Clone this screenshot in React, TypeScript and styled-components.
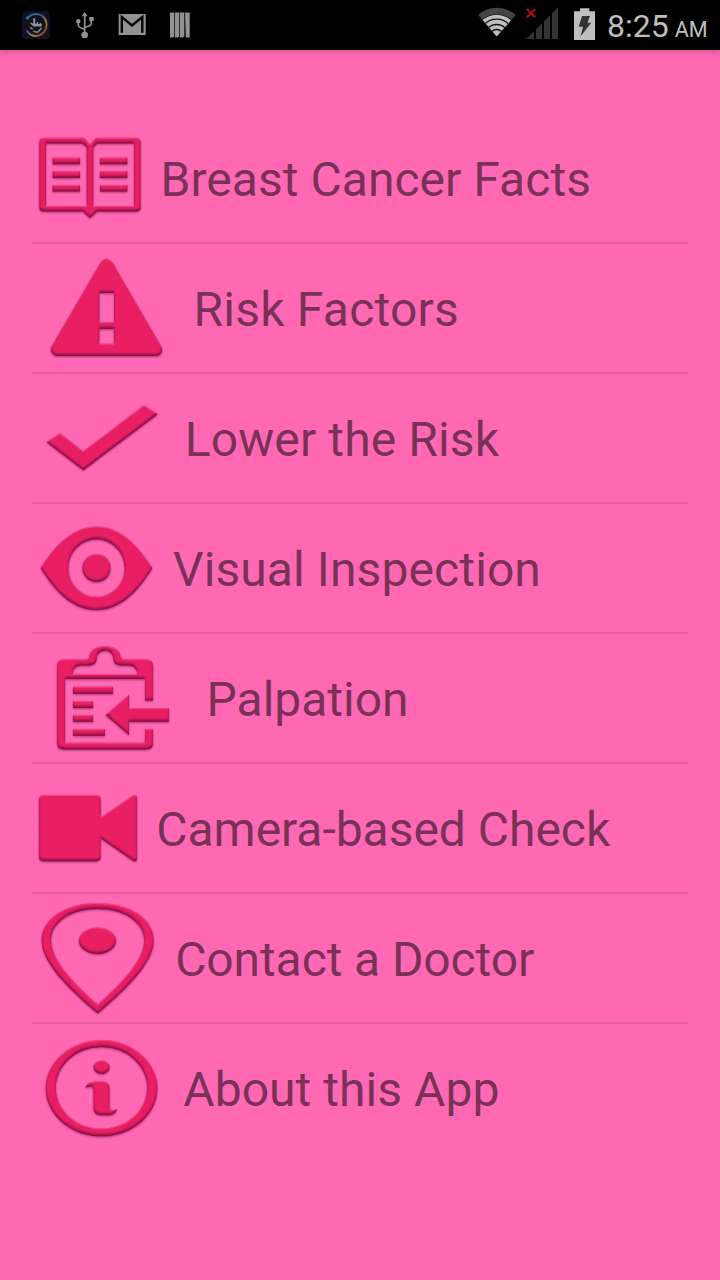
import React from "react";
import styled, { createGlobalStyle } from "styled-components";

const GlobalStyle = createGlobalStyle`
  body {
    margin: 0;
    background: #ff69b4;
    font-family: Roboto, "Noto Sans", sans-serif;
  }
`;

const Screen = styled.div`
  display: flex;
  flex-direction: column;
  width: 720px;
  height: 1280px;
  overflow: hidden;
  background: #ff69b4;
`;

const StatusBar = styled.header`
  display: flex;
  justify-content: space-between;
  flex: none;
  height: 50px;
  background: #000;
  box-shadow: 0 1px 6px rgba(60, 0, 40, 0.3);
`;

const StatusGroup = styled.div`
  display: flex;
`;

const Clock = styled.time`
  width: 113px;
  height: 50px;
  line-height: 53px;
  font-size: 32px;
  color: #bebebe;
  white-space: nowrap;
`;

const Meridiem = styled.span`
  margin-left: 6px;
  font-size: 21.6px;
`;

const Menu = styled.ul`
  list-style: none;
  margin: 64px 32px 0;
  padding: 0;
`;

const MenuItem = styled.li`
  display: flex;
  height: 128px;
  border-bottom: 2px solid #e65fa3;

  &:last-child {
    border-bottom-color: transparent;
  }
`;

const MenuIcon = styled.svg<{ $width: number }>`
  flex: none;
  width: ${(p) => p.$width}px;
  height: 128px;
  overflow: visible;
  fill: #e91e63;
  fill-rule: evenodd;
`;

const Label = styled.span<{ $spacing: number }>`
  font-size: 48px;
  line-height: 132px;
  letter-spacing: ${(p) => p.$spacing}px;
  color: #7a3158;
  white-space: nowrap;
`;

interface Entry {
  label: string;
  iconWidth: number;
  spacing: number;
  icon: React.ReactNode;
}

const entries: Entry[] = [
  {
    label: "Breast Cancer Facts",
    iconWidth: 128.5,
    spacing: 0.04,
    icon: (
      <>
        <path d="M12 23.7H52L58 30.5L64 23.7H104Q108.7 23.7 108.7 28.5V93Q108.7 97.5 104 97.5H65L58 104.2L51 97.5H12Q7.3 97.5 7.3 93V28.5Q7.3 23.7 12 23.7ZM14 29.5V92H54.7V33.5L50.7 29.5ZM61.3 33.5V92H102V29.5H65.3Z" />
        <path d="M20.7 43.7H48V50.3H20.7ZM20.7 57.3H48V64H20.7ZM20.7 71H48V77.6H20.7ZM68 43.7H95.3V50.3H68ZM68 57.3H95.3V64H68ZM68 71H95.3V77.6H68Z" />
      </>
    ),
  },
  {
    label: "Risk Factors",
    iconWidth: 161.5,
    spacing: 0.22,
    icon: (
      <path d="M68.8 18Q74.5 11 80.2 18L129 102Q132.5 108.5 125.5 112H24Q16.5 108.5 19.8 102ZM67.3 49V78H82V49ZM67.3 85V99.7H82V85Z" />
    ),
  },
  {
    label: "Lower the Risk",
    iconWidth: 152.7,
    spacing: 0.12,
    icon: <path d="M14.7 68.2L28 59.3L51.3 77.2L112 31.3L125.7 40.3L51.3 96.3Z" />,
  },
  {
    label: "Visual Inspection",
    iconWidth: 141,
    spacing: 0.1,
    icon: (
      <>
        <path d="M8.7 64C25 38 43 22.5 64.5 22.5S104 38 120.3 64C104 91 86 106 64.5 106S25 91 8.7 64ZM36.3 64a28.2 28.8 0 1 0 56.4 0a28.2 28.8 0 1 0-56.4 0Z" />
        <circle cx="64.5" cy="64" r="14" />
      </>
    ),
  },
  {
    label: "Palpation",
    iconWidth: 174.5,
    spacing: 0,
    icon: (
      <>
        <path d="M32 25.3H53Q57.3 25.3 57.7 21C59 15.5 65 12 73 12S87 15.5 88.3 21Q88.7 25.3 93 25.3H114Q121 25.3 121 32V66.5H113V45H33V108.7H113V95.3H121V109Q121 115.5 114 115.5H32Q25 115.5 25 109V32Q25 25.3 32 25.3ZM40.7 40H105.3C105.3 34 101 31.5 96 31.5H89C84 31.5 81.3 28.5 81.3 24.5C81 14 65 14 64.7 24.5C64.7 28.5 62 31.5 57 31.5H50C45 31.5 40.7 34 40.7 40Z" />
        <path d="M41 52.7H81V59.7H41ZM41 67.3H61V74H41ZM41 81H61V87.7H41ZM41 95.3H73V101.7H41Z" />
        <path d="M73.7 81L97 60.7V74H137V87.7H97V101Z" />
      </>
    ),
  },
  {
    label: "Camera-based Check",
    iconWidth: 124.3,
    spacing: -0.03,
    icon: (
      <path d="M12 31H64Q68.7 31 68.7 35.7V53.5L101 31.6Q105 30.3 105 34V94.7Q105 98.3 101 96.7L68.7 74.3V92.5Q68.7 97.3 64 97.3H12Q7 97.3 7 92.5V35.7Q7 31 12 31Z" />
    ),
  },
  {
    label: "Contact a Doctor",
    iconWidth: 143.2,
    spacing: -0.1,
    icon: (
      <>
        <path d="M65.7 119.5C44 101 9.7 71 9.7 46.5C9.7 24 34 9 65.7 9S121.7 24 121.7 46.5C121.7 71 87.4 101 65.7 119.5ZM65.7 110.5C84 94 112.3 68 112.3 46.5C112.3 28 92 15 65.7 15S19 28 19 46.5C19 68 47.4 94 65.7 110.5Z" />
        <ellipse cx="65.5" cy="46.7" rx="18.5" ry="13.3" />
      </>
    ),
  },
  {
    label: "About this App",
    iconWidth: 151.3,
    spacing: 0.05,
    icon: (
      <>
        <path d="M13.7 64.2a55.8 48.1 0 1 0 111.6 0a55.8 48.1 0 1 0-111.6 0ZM23.8 63.8a45.7 40.8 0 1 1 91.4 0a45.7 40.8 0 1 1-91.4 0Z" />
        <ellipse cx="69.6" cy="43.2" rx="8" ry="6.7" />
        <path d="M53.5 63.4C55 59 59 57.5 65 57.5H71Q77.5 57.5 77.5 64V82Q77.5 86.5 81.5 86.3L85 85.3C84 89.5 80 91.3 76 91.3H69Q61.5 91.3 61.5 84V66Q61.5 62.5 58 62.5Z" />
      </>
    ),
  },
];

/* Raised edge for the menu icons: dark lower rim, pale upper rim, faint halo. */
const BevelDefs = () => (
  <defs>
    <filter id="bevel" filterUnits="userSpaceOnUse" x="0" y="0" width="150" height="128" colorInterpolationFilters="sRGB">
      <feOffset in="SourceAlpha" dy="-1.6" result="up" />
      <feGaussianBlur in="up" stdDeviation="0.8" result="upSoft" />
      <feComposite in="SourceAlpha" in2="upSoft" operator="out" result="lowerRim" />
      <feFlood floodColor="#6a0a38" floodOpacity="0.8" />
      <feComposite in2="lowerRim" operator="in" result="lowerShade" />
      <feOffset in="SourceAlpha" dy="1" result="down" />
      <feGaussianBlur in="down" stdDeviation="0.7" result="downSoft" />
      <feComposite in="SourceAlpha" in2="downSoft" operator="out" result="upperRim" />
      <feFlood floodColor="#f56a9c" floodOpacity="0.5" />
      <feComposite in2="upperRim" operator="in" result="upperShade" />
      <feGaussianBlur in="SourceAlpha" stdDeviation="1.3" result="haloBase" />
      <feOffset in="haloBase" dy="0.6" result="haloShape" />
      <feFlood floodColor="#7a1450" floodOpacity="0.65" />
      <feComposite in2="haloShape" operator="in" result="halo" />
      <feMerge>
        <feMergeNode in="halo" />
        <feMergeNode in="SourceGraphic" />
        <feMergeNode in="upperShade" />
        <feMergeNode in="lowerShade" />
      </feMerge>
    </filter>
  </defs>
);

const NotificationIcons = () => (
  <svg width="220" height="50" viewBox="0 0 220 50" aria-hidden="true">
    <BevelDefs />
    <defs>
      <linearGradient id="dial" x1="0" y1="0" x2="1" y2="1">
        <stop offset="0.1" stopColor="#167f9b" />
        <stop offset="0.4" stopColor="#3f5aa0" />
        <stop offset="0.65" stopColor="#9c9320" />
        <stop offset="1" stopColor="#92152f" />
      </linearGradient>
    </defs>
    <rect x="22" y="11" width="28" height="28" rx="4" fill="#131020" />
    <path d="M28 17.5C33 12 42 13.5 45.3 19.5C49 27 44 36 35.5 36Q29.5 35.5 26.7 30.5" fill="none" stroke="url(#dial)" strokeWidth="1.8" />
    <circle cx="27.5" cy="18" r="1.7" fill="#15788a" />
    <path d="M33.2 18.3h2v5.2h1.6v-1.5h1.3v2h1.5v-1h1.2l1 1.5v2h-8.2l-3.3-3 1-1 1.9 1.2z" fill="#929099" />
    <path d="M30.2 27.5l2.6 1.6M33.5 30.6l1.7 1.4h3l3.3-4.3" fill="none" stroke="#85838d" strokeWidth="1.5" />
    <g fill="none" stroke="#929292" strokeWidth="1.7">
      <path d="M84.7 15V34M78.3 22V25Q78.3 27 80.5 27.7L84.7 29.5M91.3 20V23.5Q91.3 25.3 89 26L84.7 27.5" />
    </g>
    <g fill="#929292">
      <path d="M84.7 12L87.7 16.3H81.7ZM89.3 17h4.4v4h-4.4Z" />
      <circle cx="78.3" cy="21.3" r="2.2" />
      <circle cx="84.7" cy="35" r="3.3" />
      <rect x="118.7" y="14" width="27" height="21" />
      <path d="M170 12.5h4.3V37h-1.2l-.8 1-.8-1-.8 1-.7-1ZM175 12.5h4.3V37h-1.2l-.8 1-.8-1-.8 1-.7-1ZM180 12.5h4.3V37h-1.2l-.8 1-.8-1-.8 1-.7-1ZM185 12.5h4.7V38l-.8-1-.8 1-.8-1-.8 1-.7-1Z" />
    </g>
    <path d="M121.8 32.8V17L132 25.5L142.3 17V32.8" fill="none" stroke="#050505" strokeWidth="2.4" />
  </svg>
);

const SystemIcons = () => (
  <svg width="132" height="50" viewBox="475 0 132 50" aria-hidden="true">
    <defs>
      <clipPath id="wifi-fan">
        <path d="M496.7 36.5L477.5 14Q497 0 516.5 14Z" />
      </clipPath>
    </defs>
    <g clipPath="url(#wifi-fan)">
      <circle cx="496.7" cy="36.5" r="28.7" fill="#444" />
      <circle cx="496.7" cy="36.5" r="22.3" fill="#000" />
      <circle cx="496.7" cy="36.5" r="21.7" fill="#bebebe" />
      <g fill="none" stroke="#111" strokeWidth="1.3">
        <circle cx="496.7" cy="36.5" r="17.3" />
        <circle cx="496.7" cy="36.5" r="12" />
        <circle cx="496.7" cy="36.5" r="7" />
      </g>
    </g>
    <path d="M526 39L534 31.3V39ZM536 29.3L542 23.3V39H536ZM544 21.3L550 15.2V39H544ZM552 13.2L558 7.5V39H552Z" fill="#333" />
    <path d="M526.8 9L535.3 17.3M535.3 9L526.8 17.3" stroke="#a90c0c" strokeWidth="2" />
    <path d="M580 8.3H589.3V11.3H595V40H574V11.3H580Z" fill="#bebebe" />
    <path d="M582 16H590L587.5 22.7H591.3L580.5 36.5L583 26.7H578.7Z" fill="#333" />
  </svg>
);

export default function App() {
  return (
    <>
      <GlobalStyle />
      <Screen>
        <StatusBar>
          <NotificationIcons />
          <StatusGroup>
            <SystemIcons />
            <Clock>
              8:25<Meridiem>AM</Meridiem>
            </Clock>
          </StatusGroup>
        </StatusBar>
        <Menu>
          {entries.map((entry) => (
            <MenuItem key={entry.label}>
              <MenuIcon $width={entry.iconWidth} viewBox={`0 0 ${entry.iconWidth} 128`} aria-hidden="true">
                <g filter="url(#bevel)">{entry.icon}</g>
              </MenuIcon>
              <Label $spacing={entry.spacing}>{entry.label}</Label>
            </MenuItem>
          ))}
        </Menu>
      </Screen>
    </>
  );
}
